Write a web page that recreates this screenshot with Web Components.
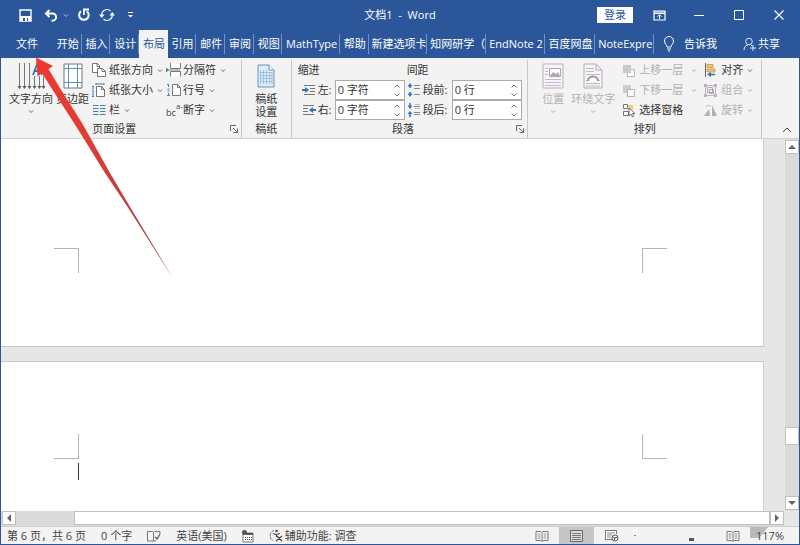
<!DOCTYPE html>
<html lang="zh-CN">
<head>
<meta charset="utf-8">
<title>文档1 - Word</title>
<style>
html,body{margin:0;height:100%}
body{font:11px/14px "Open Sans","Noto Sans CJK SC",sans-serif;color:#333;--blue:#2b579a;overflow:hidden}
</style>
</head>
<body>
<word-window></word-window>
<script>
const chev='<path d="M1 1.5l2 2 2-2" fill="none" stroke="#666"/>';
const ICONS={
save:[13,13,'<path d="M1 1h11v11H1z" fill="none" stroke="#fff" stroke-width="1.4"/><path d="M1 7h11v5H1z" fill="#fff"/><path d="M4 9h2v3H4zM8 9h1v3H8z" fill="#2b579a"/>'],
undo:[14,13,'<path d="M2 4.5h6.5a3.6 3.6 0 0 1 0 7.2H7.500M5.500 1L2 4.500 5.500 8" fill="none" stroke="#fff" stroke-width="2"/>'],
redo:[14,14,'<path d="M4 3.200A4.800 4.800 0 1 0 9.800 3.200" fill="none" stroke="#fff" stroke-width="2"/><path d="M6.900 7V1.500H12" fill="none" stroke="#fff" stroke-width="1.800"/>'],
sync:[16,14,'<path d="M2.800 7.500A5.200 5.200 0 0 1 11.500 3M13.200 6.500A5.200 5.200 0 0 1 4.500 11" fill="none" stroke="#fff" stroke-width="1.200"/><path d="M0 6.500h5.500L2.700 10zM10.500 7.500H16L13.300 4z" fill="#fff"/>'],
custom:[7,8,'<path d="M1 1.500h5" stroke="#fff"/><path d="M1 4h5L3.500 6.500z" fill="#fff"/>'],
wchev:[6,5,'<path d="M1 1.500l2 2 2-2" fill="none" stroke="#b9cbe6"/>'],
chev:[6,5,chev],
ropt:[13,11,'<path d="M1 1h11v9H1zM1 3.500h11" fill="none" stroke="#fff" stroke-width="1.200"/><path d="M1 2h11" stroke="#fff"/><path d="M6.500 9V5M4.500 6.800l2-2 2 2" fill="none" stroke="#fff"/>'],
min:[10,10,'<path d="M0 5.500h10" stroke="#fff"/>'],
max:[10,10,'<path d="M.5 .5h9v9h-9z" fill="none" stroke="#fff"/>'],
close:[10,10,'<path d="M.5 .5l9 9M9.500 .5l-9 9" stroke="#fff" stroke-width="1.100"/>'],
bulb:[12,16,'<path d="M4 11C4 8.500 1.500 8 1.500 5a4.500 4.500 0 0 1 9 0c0 3-2.500 3.500-2.500 6zM4 13h4M5 15h2" fill="none" stroke="#fff"/>'],
share:[14,14,'<circle cx="6" cy="4.500" r="3.300" fill="none" stroke="#dce6f5"/><path d="M1 13c0-3 1.500-4.500 4-5M8 8l1.500 1M7 11h6M10 8v6" fill="none" stroke="#dce6f5"/>'],
textdir:[28,30,'<path d="M2.500 2v24M7.500 2v24M12.500 2v24M17.500 15v11M22.500 15v11M26.500 15v11" stroke="#777" fill="none"/><path d="M.5 25l2 3 2-3zM5.500 25l2 3 2-3zM10.500 25l2 3 2-3zM15.500 25l2 3 2-3zM20.500 25l2 3 2-3zM24.500 25l2 3 2-3z" fill="#555"/><path d="M16 14l4.500-12 4.500 12M17.500 10h6" stroke="#2e75b6" stroke-width="1.800" fill="none"/>'],
margins:[20,26,'<path d="M1 1h18v24H1z" fill="#fff" stroke="#777"/><path d="M5.500 1v24M14.500 1v24M1 5.500h18M1 19.500h18" stroke="#5b8fb9" fill="none"/>'],
orient:[14,14,'<path d="M.5 .5h5l2 2v7h-7zM5 .5v3h3" fill="#fff" stroke="#777"/><path d="M5.500 5.500h5l3 3v5h-8zM10 5.500v3h3.500" fill="#fff" stroke="#777"/>'],
size:[14,14,'<path d="M4.500 3.500h5l3 3v7h-8zM9.500 3.500v3h3" fill="#fff" stroke="#777"/><path d="M4 1h8M1 3.500v10M0 3.500h2M0 13.500h2M4 0v2M12 0v2" stroke="#3f83ad" fill="none"/>'],
cols:[14,14,'<path d="M1 2.500h5.500M1 5.500h5.500M1 8.500h5.500M1 11.500h5.500M8 2.500h5.500M8 5.500h5.500M8 8.500h5.500M8 11.500h5.500" stroke="#3f83ad"/>'],
breaks:[16,14,'<path d="M4.500 0v5.500h10V0M4.500 13.500V8.500h10v5" fill="#fff" stroke="#777"/><path d="M0 7h14" stroke="#888"/><path d="M0 4.500l3 2.500-3 2.500z" fill="#3f83ad"/>'],
lines:[16,14,'<path d="M6.500 1.500h5l3 3v8h-8zM11.500 1.500v3h3" fill="#fff" stroke="#777"/><path d="M2.500 1v3M1.500 6h2M1.500 8h2M2.500 10v3M1 1.500h2M1 12.500h3" stroke="#3f83ad"/>'],
hyph:[16,14,'<text x="0" y="13" font-size="9" fill="#444">bc</text><text x="10" y="6" font-size="8" fill="#444">a-</text>'],
launch:[8,8,'<path d="M.5 6V.5H6M3 3l4 4M7.500 3.500v4h-4" fill="none" stroke="#666"/>'],
grid:[18,24,'<path d="M1 1h11l5 5v17H1z" fill="#dcebf8" stroke="#6f93b5"/><path d="M12 1v5h5" fill="#fff" stroke="#6f93b5"/><path d="M3.500 6v14M6.500 6v14M9.500 6v14M12.500 8v12M15 8v12M3 8.500h12M3 11.500h12M3 14.500h12M3 17.500h12" stroke="#8db1d2" stroke-width=".7"/>'],
indl:[14,12,'<path d="M2 1.500h11M8 4.500h5M8 7.500h5M2 10.500h11" stroke="#777"/><path d="M0 6h4" stroke="#2e75b6" stroke-width="2"/><path d="M3 3l4 3-4 3z" fill="#2e75b6"/>'],
indr:[14,12,'<path d="M1 1.500h11M1 4.500h5M1 7.500h5M1 10.500h11" stroke="#777"/><path d="M10 6h4" stroke="#2e75b6" stroke-width="2"/><path d="M11 3L7 6l4 3z" fill="#2e75b6"/>'],
before:[14,14,'<path d="M7 2.500h6M7 5.500h6M7 11.500h6" stroke="#888"/><path d="M3 2v3M3 9v3" stroke="#2e75b6" stroke-width="1.500"/><path d="M.5 3.500L3 0l2.500 3.500zM.5 10.500L3 14l2.500-3.500z" fill="#2e75b6"/>'],
after:[14,14,'<path d="M7 3.500h6M7 9.500h6M7 11.500h6" stroke="#888"/><path d="M8 1.500h5M8 5.500h5" stroke="#bbb"/><path d="M3 0v4M3 10v4" stroke="#2e75b6" stroke-width="1.500"/><path d="M.5 2.500L3 6l2.500-3.500zM.5 11L3 8l2.500 3z" fill="#2e75b6"/>'],
pos:[22,26,'<path d="M1 1h20v24H1z" fill="#f8f3f8" stroke="#b9aebb"/><path d="M7.500 5.500h11v8h-11z" fill="#fff" stroke="#aaa"/><path d="M8 13l3-4 3 2 2-2 2 4z" fill="#aaa"/><path d="M3 5.500h3M3 8.500h3M3 11.500h3M3 16.500h16M3 19.500h16M3 22.500h16" stroke="#c4bcc5"/>'],
wrap:[20,26,'<path d="M1 1h12l6 6v18H1zM13 1v6h6" fill="#f8f3f8" stroke="#b4abb6"/><path d="M3 5.500h8M3 8.500h8M3 11.500h14M3 20.500h14M3 23h14M3 17.500h2M15 17.500h2" stroke="#bbb"/><path d="M5 18a5 4.500 0 0 1 10 0" fill="#fff" stroke="#999" stroke-width="2"/>'],
front:[13,13,'<path d="M5.500 5.500h7v7h-7z" fill="#fff" stroke="#b4b4b4"/><path d="M1 1h8v8H1z" fill="#c6c6c6"/>'],
back:[13,13,'<path d="M1 1h8v8H1z" fill="#c9c9c9"/><path d="M5.500 5.500h7v7h-7z" fill="#fff" stroke="#aaa"/>'],
pane:[13,14,'<path d="M1.500 1.500h4v4h-4zM1.500 8.500h5v4h-5z" fill="#fff" stroke="#777"/><path d="M6 2h5v5H6z" fill="#f2cf80"/><path d="M7 5v8l2-2 1.500 3 1.200-.6L10.500 10.500H13z" fill="#fff" stroke="#555" stroke-width=".8"/>'],
align:[13,14,'<path d="M1.500 0v14" stroke="#666"/><path d="M3 1.500h6v3H3zM3 6h8v3H3z" fill="#efc577" stroke="#b98c41" stroke-width=".7"/><path d="M5 11.500h6" stroke="#2e75b6" stroke-width="1.500"/><path d="M3 11.500L7 9v5z" fill="#2e75b6"/>'],
group:[13,14,'<path d="M1.500 2.500h10v10h-10z" fill="none" stroke="#b9a9bd"/><path d="M0 1h3v3H0zM10 1h3v3h-3zM0 11h3v3H0zM10 11h3v3h-3z" fill="#b9a9bd"/><path d="M3.500 4.500h5v5h-5zM5.500 6.500h4v4h-4z" fill="#f4f0f5" stroke="#aa9cae"/>'],
rotate:[14,13,'<path d="M6 12H0L5 5zM8 12V1l5 11z" fill="#aaa"/><path d="M2 3.500C3 1 5 1 7 2.500" fill="none" stroke="#aaa"/>'],
up:[10,6,'<path d="M1 5l4-4 4 4" fill="none" stroke="#444"/>'],
tu:[8,6,'<path d="M0 5l4-4 4 4z" fill="#666"/>'],td:[8,6,'<path d="M0 1l4 4 4-4z" fill="#666"/>'],
tl:[6,8,'<path d="M5 0L1 4l4 4z" fill="#666"/>'],tr:[6,8,'<path d="M1 0l4 4-4 4z" fill="#666"/>'],
su:[8,6,'<path d="M1.500 4.500L4 2l2.500 2.500" fill="none" stroke="#777"/>'],sd:[8,6,'<path d="M1.500 1.500L4 4l2.500-2.500" fill="none" stroke="#777"/>'],
proof:[14,12,'<path d="M6.500 2v9H.5V1.500h5l1 1 1-1H13V4M6.500 11H9" fill="none" stroke="#777"/><path d="M8 7l2 2 3-5" fill="none" stroke="#555" stroke-width="1.200"/>'],
macro:[12,12,'<path d="M1 3h10v9H1z" fill="#fff" stroke="#777"/><path d="M4 3h7v2H4zM3 7h1v1H3zM5 7h1v1H5zM7 7h1v1H7zM9 7h1v1H9zM3 9h1v1H3zM5 9h1v1H5zM7 9h1v1H7zM9 9h1v1H9z" fill="#555"/><circle cx="2.500" cy="2.500" r="2.500" fill="#555"/>'],
access:[14,13,'<path d="M5 1.500C0 3 0 10 4 11.500" fill="none" stroke="#666" stroke-dasharray="3 1"/><circle cx="7.500" cy="2" r="1.300" fill="#555"/><path d="M4 4.500l3 1 4-1M7.500 5v3M8 7l5 5M13 7l-6 5" fill="none" stroke="#444" stroke-width="1.200"/>'],
book:[14,12,'<path d="M7 2.500v9M1 1.500h5l1 1 1-1h5v9H8l-1 1-1-1H1z" fill="#fff" stroke="#777"/><path d="M2.500 4h3M2.500 6h3M2.500 8h3M8.500 4h3M8.500 6h3M8.500 8h3" stroke="#888"/>'],
print:[13,12,'<path d="M.5 .5h12v11H.5z" fill="#ddd" stroke="#666"/><path d="M2 3.500h9M2 5.500h9M2 7.500h9M2 9.500h9" stroke="#777"/>'],
web:[14,13,'<path d="M7 10.500H.5v-9h11V5" fill="#fff" stroke="#777"/><path d="M2 4h8M2 6h5M2 8h4" stroke="#888"/><circle cx="10" cy="9" r="3" fill="#fff" stroke="#555"/><path d="M8 8l2 1 2-1M9 11l1-2" stroke="#555" fill="none"/>']
};
const define=(name,html,setup)=>customElements.define(name,class extends HTMLElement{
  connectedCallback(){
    if(this.shadowRoot)return;
    const t=document.createElement('template');
    t.innerHTML='<style>*{box-sizing:border-box}button{font:inherit;color:inherit;background:none;border:0;padding:0;margin:0}</style>'+(typeof html==='function'?html(this):html);
    this.attachShadow({mode:'open'}).append(t.content.cloneNode(true));
    if(setup)setup(this);
  }
});
define('w-icon',e=>{const [w,h,p]=ICONS[e.getAttribute('name')];
  return `<style>:host{display:inline-flex;flex:none}svg{display:block;overflow:visible}</style><svg width="${w}" height="${h}" viewBox="0 0 ${w} ${h}" aria-hidden="true">${p}</svg>`});

define('w-titlebar',`<style>
:host{display:grid;grid-template-columns:1fr auto 1fr;align-items:center;height:30px;flex:none;background:var(--blue);color:#fff}
div{display:flex;align-items:center}.l{padding-left:18px}.r{justify-content:flex-end}
button{display:flex;align-items:center;justify-content:center}
.gap{margin-left:12px}.c{margin-left:5px}.n{margin-left:8px}
.login{background:#fff;color:#2b579a;width:36px;height:16px;margin-right:6px}.w{width:40px;height:30px}
h1{font:inherit;margin:0;white-space:pre}</style>
<div class="l"><button aria-label="保存"><w-icon name="save"></w-icon></button><button class="gap" aria-label="撤消"><w-icon name="undo"></w-icon></button><button class="c" aria-label="撤消列表"><w-icon name="wchev"></w-icon></button><button class="n" aria-label="重复"><w-icon name="redo"></w-icon></button><button class="n" aria-label="同步"><w-icon name="sync"></w-icon></button><button class="gap" aria-label="自定义"><w-icon name="custom"></w-icon></button></div>
<h1>文档1  -  Word</h1>
<div class="r"><button class="login">登录</button><button class="w" aria-label="功能区显示选项"><w-icon name="ropt"></w-icon></button><button class="w" aria-label="最小化"><w-icon name="min"></w-icon></button><button class="w" aria-label="最大化"><w-icon name="max"></w-icon></button><button class="w" aria-label="关闭"><w-icon name="close"></w-icon></button></div>`);

define('w-tab',`<style>:host{display:block;min-width:0;height:28px;color:#fff;position:relative}
button{width:100%;height:28px;overflow:hidden;white-space:pre;text-align:center;padding:0 2px 0 3px}
:host([cut]) button{text-align:left}
:host(:not([active])):after{content:"";position:absolute;right:0;top:4px;height:20px;border-right:1px solid #6f93cc}
:host([active]){background:#f3f3f3;color:#2b579a}</style><button role="tab"><slot></slot></button>`);

define('w-tabs',`<style>:host{display:flex;height:28px;flex:none;background:var(--blue);color:#fff;align-items:center}
.file{width:52px;height:28px}
.strip{flex:1;min-width:0;display:grid;grid-template-columns:repeat(8,20fr) 40fr 20fr repeat(3,41fr) 35fr 41fr}
.tell{display:flex;align-items:center;gap:9px;margin-left:9px}.share{display:flex;align-items:center;gap:1px;margin:0 19px 0 26px}</style>
<button class="file">文件</button>
<div class="strip" role="tablist"><w-tab>开始</w-tab><w-tab>插入</w-tab><w-tab>设计</w-tab><w-tab active>布局</w-tab><w-tab>引用</w-tab><w-tab>邮件</w-tab><w-tab>审阅</w-tab><w-tab>视图</w-tab><w-tab>MathType</w-tab><w-tab>帮助</w-tab><w-tab>新建选项卡</w-tab><w-tab cut>知网研学（</w-tab><w-tab cut>EndNote 2</w-tab><w-tab>百度网盘</w-tab><w-tab cut>NoteExpre</w-tab></div>
<button class="tell"><w-icon name="bulb"></w-icon>告诉我</button><button class="share"><w-icon name="share"></w-icon>共享</button>`);

define('w-cmd',e=>`<style>:host{display:flex;height:20px}:host([off]){color:#b1b1b1}:host([off]) w-icon{opacity:.9}
button{display:flex;align-items:center;white-space:nowrap;flex:1}.i{width:17px;display:flex}.t{flex:none}w-icon.v{margin-left:4px}
:host([far]) .v{margin-left:8px}:host([off]) .v{opacity:.5}</style>
<button ${e.hasAttribute('off')?'disabled':''}><span class="i"><w-icon name="${e.getAttribute('icon')}"></w-icon></span><span class="t"><slot></slot></span>${e.hasAttribute('plain')?'':'<w-icon class="v" name="chev"></w-icon>'}</button>`);

define('w-big',e=>`<style>:host{display:flex}:host([off]){color:#b1b1b1}:host([off]) .v{opacity:.5}
button{display:flex;flex-direction:column;align-items:center;height:60px;line-height:13px;white-space:pre}
.i{height:32px;display:flex;align-items:center}.v{margin-top:4px}</style>
<button ${e.hasAttribute('off')?'disabled':''}><span class="i"><w-icon name="${e.getAttribute('icon')}"></w-icon></span><span><slot></slot></span>${e.hasAttribute('plain')?'':'<w-icon class="v" name="chev"></w-icon>'}</button>`);

define('w-group',e=>`<style>:host{display:flex;flex-direction:column;min-width:0;border-right:1px solid #c8c8c8;margin:2px 0 0;height:78px}
.b{display:flex;height:60px}.f{display:flex;height:20px;align-items:center}.f span{flex:1;text-align:center}.f button{display:flex;margin-right:1px;padding:2px}</style>
<div class="b"><slot></slot></div><div class="f"><span>${e.getAttribute('label')}</span>${e.hasAttribute('launcher')?'<button aria-label="对话框启动器"><w-icon name="launch"></w-icon></button>':''}</div>`);

define('w-spin',e=>`<style>:host{display:flex;height:20px;align-items:center}
label{display:flex;align-items:center;white-space:nowrap;width:33px;gap:2px}:host([wide]) label{width:45px}
.box{display:flex;width:70px;height:20px;border:1px solid #ababab;background:#fff}
input{border:0;padding:0 0 0 2px;margin:0;font:inherit;color:#333;min-width:0;flex:1;background:none;outline:0}
.s{display:flex;flex-direction:column;justify-content:space-around;width:14px}.s button{display:flex;justify-content:center}</style>
<label for="v"><w-icon name="${e.getAttribute('icon')}"></w-icon>${e.getAttribute('label')}</label><div class="box"><input id="v" type="text" value="${e.getAttribute('value')}"><div class="s"><button aria-label="增加"><w-icon name="su"></w-icon></button><button aria-label="减少"><w-icon name="sd"></w-icon></button></div></div>`);

define('w-ribbon',`<style>:host{display:grid;grid-template-columns:241fr 50fr 237fr 234fr 37fr;flex:none;height:81px;background:#f3f3f3;border-bottom:1px solid #d2d2d2}
.col{display:flex;flex-direction:column}.h{height:20px;line-height:20px}
.g1{display:flex;gap:3px;padding-left:8px}.g2{flex:1;display:flex;justify-content:center}
.g3{display:flex;gap:2px;padding-left:6px}.g3 w-spin{margin-left:4px}.g3 .col+.col w-spin{margin-left:0}
.g4{display:flex;padding-left:14px;gap:7px}
.x{display:flex;align-items:flex-end;justify-content:flex-end;padding:0 7px 2px 0}</style>
<w-group label="页面设置" launcher><div class="g1"><w-big icon="textdir">文字方向</w-big><w-big icon="margins">页边距</w-big>
<div class="col"><w-cmd icon="orient">纸张方向</w-cmd><w-cmd icon="size">纸张大小</w-cmd><w-cmd icon="cols">栏</w-cmd></div>
<div class="col"><w-cmd icon="breaks">分隔符</w-cmd><w-cmd icon="lines">行号</w-cmd><w-cmd icon="hyph">断字</w-cmd></div></div></w-group>
<w-group label="稿纸"><div class="g2"><w-big icon="grid" plain>稿纸
设置</w-big></div></w-group>
<w-group label="段落" launcher><div class="g3"><div class="col"><span class="h">缩进</span><w-spin icon="indl" label="左:" value="0 字符"></w-spin><w-spin icon="indr" label="右:" value="0 字符"></w-spin></div>
<div class="col"><span class="h">间距</span><w-spin wide icon="before" label="段前:" value="0 行"></w-spin><w-spin wide icon="after" label="段后:" value="0 行"></w-spin></div></div></w-group>
<w-group label="排列"><div class="g4"><w-big icon="pos" off>位置</w-big><w-big icon="wrap" off>环绕文字</w-big>
<div class="col"><w-cmd icon="front" off far>上移一层</w-cmd><w-cmd icon="back" off far>下移一层</w-cmd><w-cmd icon="pane" plain>选择窗格</w-cmd></div>
<div class="col"><w-cmd icon="align">对齐</w-cmd><w-cmd icon="group" off>组合</w-cmd><w-cmd icon="rotate" off>旋转</w-cmd></div></div></w-group>
<div class="x"><button aria-label="折叠功能区"><w-icon name="up"></w-icon></button></div>`);

define('w-page',`<style>:host{display:flex;justify-content:space-between;align-items:flex-end;background:#fff;border-right:1px solid #cfcfcf;border-bottom:1px solid #c6c6c6;padding:0 96px 73px 53px;min-height:0}
:host([next]){align-items:flex-start;border-top:1px solid #c6c6c6;border-bottom:0;padding:72px 96px 0 53px}
i{display:block;width:25px;height:25px;border:0 solid #b5b5b5}
.a{border-width:1px 1px 0 0}.b{border-width:1px 0 0 1px}
:host([next]) .a{border-width:0 1px 1px 0}:host([next]) .b{border-width:0 0 1px 1px}
.caret{display:none}:host([next]) .caret{display:block;width:1px;height:17px;background:#333;margin:4px 0 0 24px}</style>
<div><i class="a"></i><div class="caret"></div></div><i class="b"></i>`);

define('w-scroll',`<style>:host{display:flex;flex:none;background:#dadada}
button,.thumb{background:#fff;border:1px solid #c0c0c0}
button{flex:none;width:14px;height:14px;display:flex;align-items:center;justify-content:center}
span{display:flex}
.before{flex:275}.thumb{flex:none}.after{flex:51}
:host([dir=v]){flex-direction:column;width:14px;padding:1px 0}
:host([dir=v]) .thumb{height:18px}
:host([dir=h]){height:15px;padding:0 0 1px 1px}:host([dir=h]) .before{flex:58}:host([dir=h]) .thumb{flex:696}:host([dir=h]) .after{flex:none}</style>
<button aria-label="向前滚动"><span id="p"></span></button><div class="before"></div><div class="thumb"></div><div class="after"></div><button aria-label="向后滚动"><span id="n"></span></button>`,
e=>{const v=e.getAttribute('dir')==='v';e.shadowRoot.getElementById('p').innerHTML=`<w-icon name="${v?'tu':'tl'}"></w-icon>`;e.shadowRoot.getElementById('n').innerHTML=`<w-icon name="${v?'td':'tr'}"></w-icon>`});

define('w-document',`<style>:host{display:flex;flex-direction:column;flex:1;min-height:0;background:#e6e6e6}
.m{flex:1;display:flex;min-height:0}.pages{flex:1;display:grid;grid-template-rows:208fr 150fr;gap:14px;padding-right:21px}
w-scroll[dir=h]{margin-right:15px}</style>
<div class="m"><div class="pages"><w-page></w-page><w-page next></w-page></div><w-scroll dir="v"></w-scroll></div><w-scroll dir="h"></w-scroll>`);

define('w-status',`<style>:host{display:flex;flex:none;height:18px;align-items:center;background:#f3f3f3;border-top:1px solid #d0d0d0;white-space:pre;padding-left:6px;color:#444}
button{display:flex;align-items:center;gap:2px;height:17px}.l{display:flex;gap:15px;flex:1}.r{display:flex;align-items:center;height:17px}
.v{width:35px;justify-content:center}.on{background:#c6c6c6}.dot{width:2px;height:1px;background:#888;margin:0 53px 0 5px}.dash{width:5px;height:3px;background:#555;margin:8px 32px 0 0}
.zoom{position:relative;margin:0 15px 0 16px}.blot{position:absolute;left:-6px;top:0;width:18px;height:11px;background:#b9b9b9;clip-path:polygon(0 0,100% 0,65% 70%,50% 100%,0 100%)}.n{position:relative}</style>
<div class="l"><button>第 6 页，共 6 页</button><button>0 个字</button><button aria-label="校对"><w-icon name="proof"></w-icon></button><button>英语(美国)</button><button aria-label="宏录制"><w-icon name="macro"></w-icon></button><button><w-icon name="access"></w-icon>辅助功能: 调查</button></div>
<div class="r"><button class="v" aria-label="阅读视图"><w-icon name="book"></w-icon></button><button class="v on" aria-label="页面视图"><w-icon name="print"></w-icon></button><button class="v" aria-label="Web 版式"><w-icon name="web"></w-icon></button><span class="dot"></span><span class="dash"></span><w-icon name="book"></w-icon><button class="zoom"><span class="blot"></span><span class="n">117%</span></button></div>`);

define('w-arrow',`<style>:host{position:absolute;left:0;top:0;pointer-events:none}svg{display:block}</style>
<svg width="180" height="285" viewBox="0 0 180 285" aria-hidden="true"><defs><linearGradient id="g" x1="0" y1="0" x2="0" y2="1"><stop offset="0" stop-color="#f0382f"/><stop offset=".4" stop-color="#dd3d37"/><stop offset="1" stop-color="#8c4a44"/></linearGradient></defs><path d="M35 57.500L52 66 47.500 69 59.500 89 81 123 90 139 109 173 128.500 206 172 278.500 126 206 104 173 83 139 73 123 51 89 41 73 36.500 76.500z" fill="url(#g)"/></svg>`);

define('word-window',`<style>:host{display:flex;flex-direction:column;height:100vh;box-sizing:border-box;position:relative;border:solid #2b579a;border-width:0 1px 1px 1px;overflow:hidden}</style>
<w-titlebar></w-titlebar><w-tabs></w-tabs><w-ribbon></w-ribbon><w-document></w-document><w-status></w-status><w-arrow></w-arrow>`);
</script>
</body>
</html>
